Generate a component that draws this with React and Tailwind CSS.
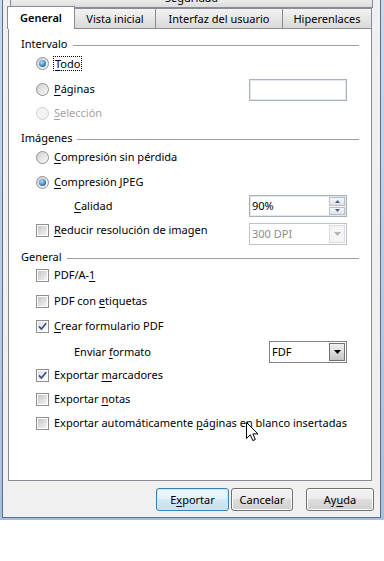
import React from "react";

const U = ({ children }) => (
  <span className="underline decoration-1 underline-offset-[2px]">{children}</span>
);

const Rb = ({ checked, disabled }) => (
  <span
    className={
      disabled
        ? "w-[13px] h-[13px] rounded-full border border-[#d0d0d0] bg-[#f3f3f3] shrink-0 flex items-center justify-center"
        : "w-[13px] h-[13px] rounded-full border border-[#8e8f8f] bg-[linear-gradient(135deg,#cfcfcf,#fafafa)] shrink-0 flex items-center justify-center"
    }
  >
    {checked && (
      <span className="w-[7px] h-[7px] rounded-full bg-[radial-gradient(circle_at_40%_35%,#b4e2fb,#2f77b2_65%,#1a4c7c)]" />
    )}
  </span>
);

const Cb = ({ checked }) => (
  <span className="relative w-[13px] h-[13px] border border-[#8e8f8f] bg-white p-[1px] shrink-0 block">
    <span
      className={
        checked
          ? "block w-full h-full bg-[linear-gradient(135deg,#dcdfe3,#fbfbfb)]"
          : "block w-full h-full bg-[linear-gradient(135deg,#c4c7cc,#f3f3f3)]"
      }
    />
    {checked && (
      <svg className="absolute left-0 top-0" width="11" height="11" viewBox="0 0 11 11">
        <path d="M2 5.4 L4.4 8 L9.2 2.2" fill="none" stroke="#3c4f80" strokeWidth="1.7" />
      </svg>
    )}
  </span>
);

const Group = ({ label, className }) => (
  <div className={"flex items-center gap-[5px] h-[16px] " + (className || "")}>
    <span>{label}</span>
    <div className="flex-1 h-px bg-[#a0a0a0] mt-[2px]" />
  </div>
);

const Btn = ({ children, w, def }) => (
  <div
    className={
      def
        ? "h-[23px] rounded-[3px] border border-[#3c7fb1] bg-[linear-gradient(#eef7fc,#e3f1fa_50%,#d2e8f6_50%,#c4e0f2)] shadow-[inset_0_0_0_1px_#c5ebfd] flex items-center justify-center"
        : "h-[23px] rounded-[3px] border border-[#707070] bg-[linear-gradient(#f2f2f2,#ebebeb_50%,#dddddd_50%,#cfcfcf)] shadow-[inset_0_0_0_1px_#fbfbfb] flex items-center justify-center"
    }
    style={{ width: w }}
  >
    {children}
  </div>
);

const Arrow = ({ color }) => (
  <svg width="7" height="4" viewBox="0 0 7 4">
    <path d="M0 0 L7 0 L3.5 4 Z" fill={color} />
  </svg>
);

export default function App() {
  return (
    <div className="relative w-[384px] h-[561px] bg-white text-[11px] text-black font-['Noto_Sans',sans-serif] leading-[16px]">
      <div className="h-[520px] pl-[2px] pr-[3px] pb-[2px] bg-[linear-gradient(#c9daee,#a7c0de)] flex">
        <div className="flex-1 border-x border-b border-[#5f6e84] bg-[#f0f0f0] flex flex-col">
          {/* back tab row */}
          <div className="ml-[7px] w-[363px] h-[8px] overflow-hidden border-x border-b border-[#898c95] bg-[linear-gradient(#ececec,#dcdcdc)] flex justify-center">
            <span className="-mt-[10px] leading-[16px]">Seguridad</span>
          </div>
          {/* front tab row */}
          <div className="relative z-10 flex items-end h-[20px]">
            <div className="ml-[4px] w-[68px] h-[23px] -mb-[1px] border-x border-t border-[#898c95] bg-white flex items-start justify-center pt-[3px] font-semibold">
              General
            </div>
            <div className="w-[81px] h-[20px] border-t border-r border-[#898c95] bg-[linear-gradient(#f3f3f3,#e6e6e6_50%,#d9d9d9)] flex items-center justify-center">
              Vista inicial
            </div>
            <div className="w-[127px] h-[20px] border-t border-r border-[#898c95] bg-[linear-gradient(#f3f3f3,#e6e6e6_50%,#d9d9d9)] flex items-center justify-center">
              Interfaz del usuario
            </div>
            <div className="w-[89px] h-[20px] border-t border-r border-[#898c95] bg-[linear-gradient(#f3f3f3,#e6e6e6_50%,#d9d9d9)] flex items-center justify-center">
              Hiperenlaces
            </div>
          </div>
          {/* panel */}
          <div className="ml-[5px] w-[364px] h-[453px] border border-[#898c95] bg-white flex flex-col px-[12px] pt-[7px]">
            <Group label="Intervalo" />
            <div className="flex items-center h-[22px] pl-[15px] gap-[4px]">
              <Rb checked />
              <span className="border border-dotted border-black px-[1px] leading-[13px]">
                <U>T</U>odo
              </span>
            </div>
            <div className="flex items-center h-[30px] pl-[15px] gap-[5px]">
              <Rb />
              <span>
                <U>P</U>áginas
              </span>
              <div className="ml-auto mr-[12px] w-[98px] h-[22px] border border-[#a9b0b8] shadow-[inset_0_0_0_1px_#e3e8ee] bg-white mt-[2px]" />
            </div>
            <div className="flex items-center h-[18px] pl-[15px] gap-[5px] text-[#a3a3a3]">
              <Rb disabled />
              <span>
                <U>S</U>elección
              </span>
            </div>

            <Group label="Imágenes" className="mt-[8px]" />
            <div className="flex items-center h-[22px] pl-[15px] gap-[5px]">
              <Rb />
              <span>
                <U>C</U>ompresión sin pérdida
              </span>
            </div>
            <div className="flex items-center h-[24px] pl-[15px] gap-[5px] mt-[2px]">
              <Rb checked />
              <span>
                <U>C</U>ompresión JPEG
              </span>
            </div>
            <div className="flex items-center h-[24px]">
              <span className="ml-[53px]">
                <U>C</U>alidad
              </span>
              <div className="ml-auto mr-[12px] w-[98px] h-[22px] border border-[#a9b0b8] shadow-[inset_0_0_0_1px_#e3e8ee] bg-white flex items-center">
                <span className="pl-[2px] flex-1">90%</span>
                <div className="w-[16px] h-[18px] mr-[1px] flex flex-col gap-[1px]">
                  <div className="flex-1 border border-[#b9bec6] bg-[linear-gradient(#f6f7f9,#dde2ea)] flex items-center justify-center">
                    <svg width="5" height="3" viewBox="0 0 5 3"><path d="M0 3 L5 3 L2.5 0 Z" fill="#4e5f85" /></svg>
                  </div>
                  <div className="flex-1 border border-[#b9bec6] bg-[linear-gradient(#f6f7f9,#dde2ea)] flex items-center justify-center">
                    <svg width="5" height="3" viewBox="0 0 5 3"><path d="M0 0 L5 0 L2.5 3 Z" fill="#4e5f85" /></svg>
                  </div>
                </div>
              </div>
            </div>
            <div className="flex items-start h-[24px] pl-[15px]">
              <div className="flex items-center h-[24px] gap-[5px]">
                <Cb />
                <span>
                  <U>R</U>educir resolución de imagen
                </span>
              </div>
              <div className="ml-auto mr-[12px] mt-[5px] w-[98px] h-[22px] border border-[#bfc4ca] bg-white flex items-center text-[#8d8d8d]">
                <span className="pl-[2px] flex-1">300 DPI</span>
                <div className="w-[16px] h-[18px] mr-[1px] border border-[#d8dadd] bg-[#f4f4f4] flex items-center justify-center">
                  <Arrow color="#b5b5b5" />
                </div>
              </div>
            </div>

            <Group label="General" className="mt-[7px]" />
            <div className="flex items-center h-[20px] pl-[15px] gap-[5px]">
              <Cb />
              <span>
                PDF/A-<U>1</U>
              </span>
            </div>
            <div className="flex items-center h-[24px] pl-[15px] gap-[5px] mt-[4px]">
              <Cb />
              <span>
                PDF con <U>e</U>tiquetas
              </span>
            </div>
            <div className="flex items-center h-[24px] pl-[15px] gap-[5px] mt-[1px]">
              <Cb checked />
              <span>
                <U>C</U>rear formulario PDF
              </span>
            </div>
            <div className="flex items-center h-[22px] mt-[3px]">
              <span className="ml-[53px]">
                Enviar <U>f</U>ormato
              </span>
              <div className="ml-auto mr-[12px] w-[78px] h-[22px] border border-[#828282] bg-white flex items-center">
                <span className="pl-[2px] flex-1">FDF</span>
                <div className="w-[16px] h-[18px] mr-[1px] border border-[#707070] bg-[linear-gradient(#f0f0f0,#dcdcdc_50%,#c6c6c6)] flex items-center justify-center">
                  <Arrow color="#000" />
                </div>
              </div>
            </div>
            <div className="flex items-center h-[24px] pl-[15px] gap-[5px]">
              <Cb checked />
              <span>
                Exportar <U>m</U>arcadores
              </span>
            </div>
            <div className="flex items-center h-[24px] pl-[15px] gap-[5px]">
              <Cb />
              <span>
                Exportar <U>n</U>otas
              </span>
            </div>
            <div className="flex items-center h-[24px] pl-[15px] gap-[5px]">
              <Cb />
              <span>
                Exportar automáticamente <U>p</U>áginas en blanco insertadas
              </span>
            </div>
          </div>
          {/* buttons */}
          <div className="flex mt-[7px] ml-[153px]">
            <Btn w={73} def>
              <span>
                E<U>x</U>portar
              </span>
            </Btn>
            <div className="ml-[2px]">
              <Btn w={62}>Cancelar</Btn>
            </div>
            <div className="ml-[13px]">
              <Btn w={68}>
                <span>
                  Ay<U>u</U>da
                </span>
              </Btn>
            </div>
          </div>
        </div>
      </div>
      {/* mouse cursor */}
      <svg className="absolute left-[246px] top-[422px]" width="13" height="20" viewBox="0 0 13 20">
        <path d="M0.5 0.5 L0.5 16.5 L4.3 12.8 L6.8 18.6 L9.3 17.5 L6.9 11.9 L12 11.9 Z" fill="#fff" stroke="#000" strokeWidth="1" strokeLinejoin="miter" />
      </svg>
    </div>
  );
}
